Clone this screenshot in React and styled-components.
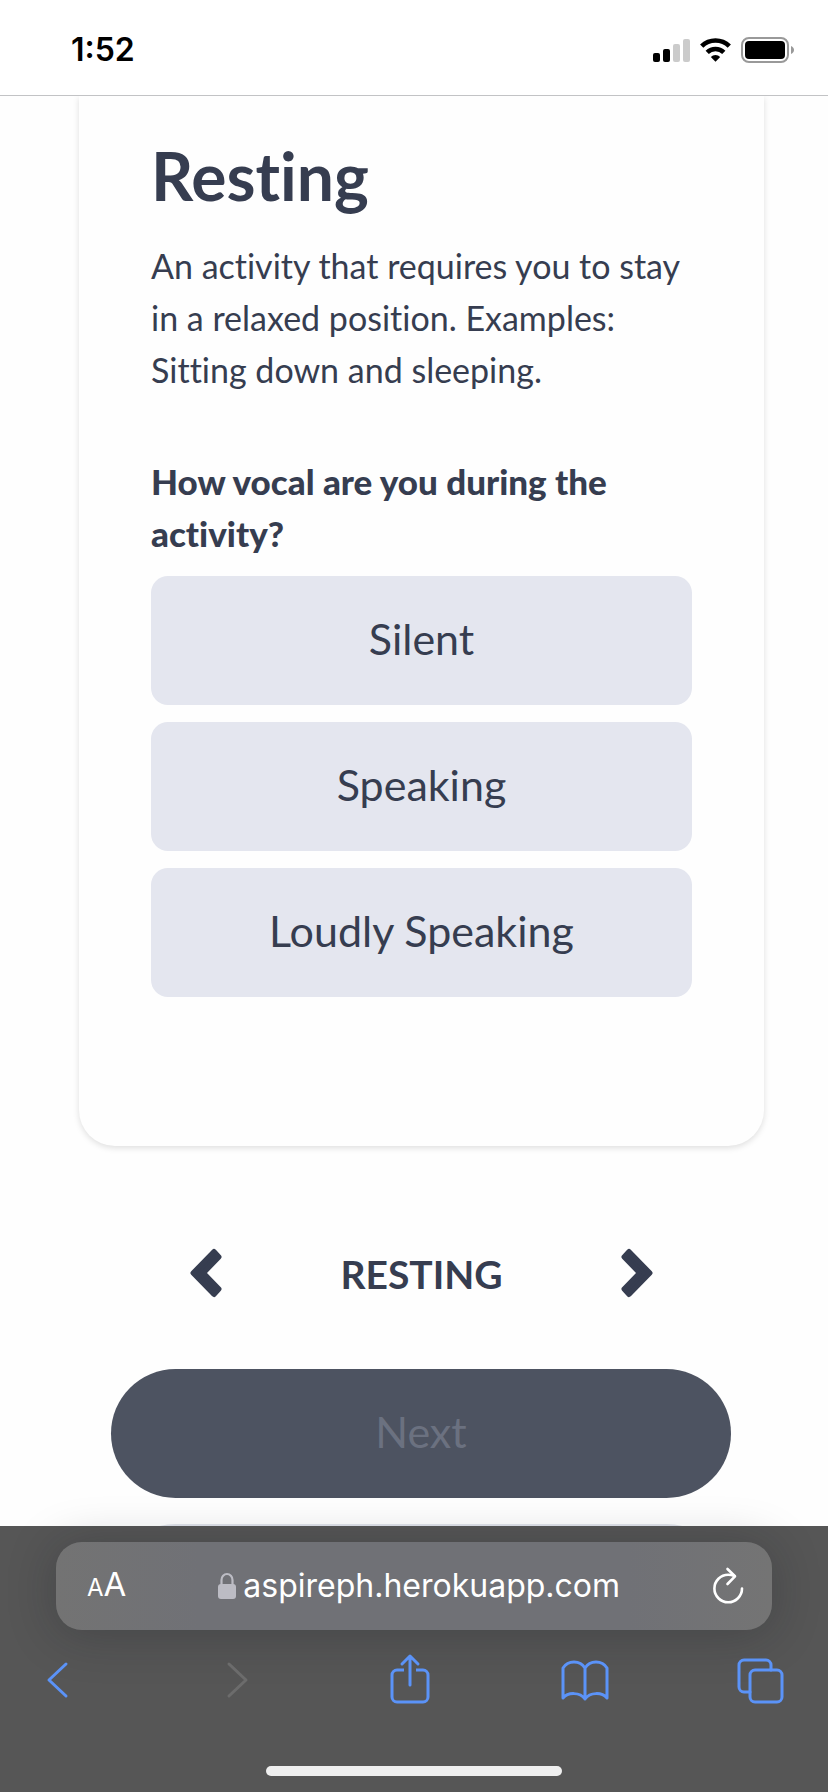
import React from "react";
import styled, { createGlobalStyle } from "styled-components";

const ink = "#363d50";
const blue = "#5b93f8";

const GlobalStyle = createGlobalStyle`
  *, *::before, *::after { box-sizing: border-box; }
  body { margin: 0; background: #fefefe; }
  button { border: 0; padding: 0; background: none; font: inherit; color: inherit; }
  h1, h2, p { margin: 0; }
  svg { display: block; }
`;

const Screen = styled.div`
  display: flex;
  flex-direction: column;
  height: 100vh;
  background: #fefefe;
  color: ${ink};
  font-family: Lato, "Liberation Sans", sans-serif;
  font-variant-ligatures: none;
`;

const StatusBar = styled.header`
  display: flex;
  align-items: center;
  justify-content: space-between;
  flex: none;
  height: 96px;
  padding: 4px 33px 0 71px;
  border-bottom: 1px solid #c2c3c5;
  background: #fff;
  color: #000;
`;

const Clock = styled.time`
  font: 600 32px/40px Inter, sans-serif;
`;

const StatusIcons = styled.div`
  display: flex;
  align-items: center;
  gap: 10px;
`;

const Main = styled.main`
  flex: 1;
  min-height: 0;
  overflow: hidden;
  padding: 0 64px 0 79px;
`;

const Card = styled.section`
  padding: 36px 72px 149px;
  border-radius: 0 0 36px 36px;
  background: #fefefe;
  box-shadow: 0 2px 6px rgba(0, 0, 0, 0.13);
`;

const Title = styled.h1`
  font-size: 66px;
  line-height: 88px;
  font-weight: 700;
`;

const Description = styled.p`
  margin-top: 20px;
  font-size: 34px;
  line-height: 52px;
`;

const Question = styled.h2`
  margin-top: 59px;
  font-size: 35px;
  line-height: 52px;
  font-weight: 900;
`;

const Options = styled.div`
  display: grid;
  gap: 17px;
  margin-top: 17px;
`;

const Option = styled.button`
  height: 129px;
  padding-bottom: 4px;
  border-radius: 17px;
  background: #e4e6ef;
  font-size: 43px;
  line-height: 64px;
`;

const Pager = styled.nav`
  display: flex;
  align-items: center;
  justify-content: space-between;
  margin-top: 98px;
  padding: 0 111px;
  height: 60px;
`;

const PagerButton = styled.button`
  display: grid;
  place-items: center;
  padding-bottom: 2px;
`;

const PagerLabel = styled.span`
  font-size: 39px;
  line-height: 56px;
  font-weight: 700;
`;

const Actions = styled.div`
  display: grid;
  gap: 26px;
  margin-top: 65px;
  padding: 0 33px 0 32px;
`;

const NextButton = styled.button`
  height: 129px;
  padding-bottom: 4px;
  border-radius: 65px;
  background: #4d5361;
  color: #6b7180;
  font-size: 43px;
  line-height: 64px;
`;

const NextPanel = styled.div`
  height: 129px;
  border-radius: 65px;
  background: #e0e2ea;
`;

const BrowserBar = styled.footer`
  display: flex;
  flex-direction: column;
  align-items: center;
  flex: none;
  padding-bottom: 16px;
  background: #565656;
`;

const AddressBar = styled.div`
  display: flex;
  align-items: center;
  justify-content: space-between;
  align-self: stretch;
  height: 88px;
  margin: 16px 56px 0;
  padding: 0 28px 0 31px;
  border-radius: 26px;
  background: linear-gradient(90deg, #737373, #707176 20%, #707176 80%, #747474);
  box-shadow: 0 4px 48px rgba(20, 22, 30, 0.26);
  color: #fff;
  font-family: Inter, sans-serif;
`;

const TextSize = styled.button`
  font-size: 33px;
  line-height: 40px;

  small { font-size: 24px; }
`;

const Address = styled.a`
  display: flex;
  align-items: center;
  gap: 7px;
  color: inherit;
  text-decoration: none;
  font-size: 32px;
  line-height: 40px;
`;

const Toolbar = styled.nav`
  display: flex;
  justify-content: space-between;
  align-self: stretch;
  margin: 22px 43px 58px 34px;
`;

const ToolButton = styled.button`
  color: ${(p) => (p.disabled ? "#6c6c6c" : blue)};
`;

const ReloadButton = styled.button`
  color: #fff;
`;

const HomeIndicator = styled.div`
  width: 296px;
  height: 10px;
  border-radius: 5px;
  background: #efefef;
`;

const ToolIcon = ({ children }) => (
  <svg width="48" height="56" viewBox="0 0 48 56" fill="none" stroke="currentColor" strokeWidth="3" strokeLinecap="round" strokeLinejoin="round" aria-hidden="true">
    {children}
  </svg>
);

const Chevron = ({ d }) => (
  <svg width="32" height="50" viewBox="0 0 32 50" fill="currentColor" stroke="currentColor" strokeWidth="5" strokeLinejoin="round" aria-hidden="true">
    <path d={d} />
  </svg>
);

const Signal = () => (
  <svg width="37" height="24" viewBox="0 0 37 24" aria-hidden="true">
    <rect x="0" y="15" width="7" height="9" rx="2" />
    <rect x="10" y="11" width="7" height="13" rx="2" />
    <rect x="20" y="6" width="7" height="18" rx="2" fill="#cbcbcb" />
    <rect x="30" y="1" width="7" height="23" rx="2" fill="#cbcbcb" />
  </svg>
);

const Wifi = () => (
  <svg width="31" height="24" viewBox="0 0 31 24" fill="none" stroke="#000" strokeWidth="4.6" aria-hidden="true">
    <path d="M1.7 8.2a19.6 19.6 0 0 1 27.6 0" />
    <path d="M7.2 14.4a11.8 11.8 0 0 1 16.6 0" />
    <path d="M10.8 19a6.8 6.8 0 0 1 9.4 0L15.500 23.800z" fill="#000" stroke="none" />
  </svg>
);

const Battery = () => (
  <svg width="54" height="26" viewBox="0 0 54 26" aria-hidden="true">
    <rect x="1" y="1" width="46" height="24" rx="7" fill="none" stroke="#999" strokeWidth="2" />
    <rect x="4" y="4" width="40" height="18" rx="4" />
    <path d="M50 9c4 1.500 4 6.500 0 8z" fill="#999" />
  </svg>
);

const Lock = () => (
  <svg width="18" height="28" viewBox="0 0 18 28" aria-hidden="true">
    <rect x="0" y="12" width="18" height="15" rx="3" fill="#bcbcc4" />
    <path d="M3.500 13V8a5.500 6 0 0 1 11 0v5" fill="none" stroke="#bcbcc4" strokeWidth="2.200" />
  </svg>
);

const Reload = () => (
  <svg width="32" height="38" viewBox="0 0 32 38" fill="none" stroke="currentColor" strokeWidth="2.600" strokeLinecap="round" strokeLinejoin="round" aria-hidden="true">
    <path d="M30 21.500A13.800 13.800 0 1 1 16.200 7.700c2 0 4.300.5 6.300 1.300" />
    <path d="M15.500 2l7.500 7.300L15.500 17" />
  </svg>
);

const options = ["Silent", "Speaking", "Loudly Speaking"];

export default function App() {
  return (
    <Screen>
      <GlobalStyle />
      <StatusBar>
        <Clock>1:52</Clock>
        <StatusIcons>
          <Signal />
          <Wifi />
          <Battery />
        </StatusIcons>
      </StatusBar>
      <Main>
        <Card>
          <Title>Resting</Title>
          <Description>
            An activity that requires you to stay in a relaxed position. Examples: Sitting down and sleeping.
          </Description>
          <Question id="vocal-question">How vocal are you during the activity?</Question>
          <Options role="group" aria-labelledby="vocal-question">
            {options.map((label) => (
              <Option key={label} type="button">{label}</Option>
            ))}
          </Options>
        </Card>
        <Pager aria-label="Activities">
          <PagerButton type="button" aria-label="Previous activity">
            <Chevron d="M3 25L24 3.500L29 9L13.500 25L29 41L24 46.500z" />
          </PagerButton>
          <PagerLabel>RESTING</PagerLabel>
          <PagerButton type="button" aria-label="Next activity">
            <Chevron d="M29 25L8 3.500L3 9L18.500 25L3 41L8 46.500z" />
          </PagerButton>
        </Pager>
        <Actions>
          <NextButton type="button" disabled>Next</NextButton>
          <NextPanel />
        </Actions>
      </Main>
      <BrowserBar>
        <AddressBar>
          <TextSize type="button" aria-label="Text size"><small>A</small>A</TextSize>
          <Address href="#">
            <Lock />
            aspireph.herokuapp.com
          </Address>
          <ReloadButton type="button" aria-label="Reload">
            <Reload />
          </ReloadButton>
        </AddressBar>
        <Toolbar aria-label="Browser">
          <ToolButton type="button" aria-label="Back">
            <ToolIcon><path d="M32 12L15 28l17 16" /></ToolIcon>
          </ToolButton>
          <ToolButton type="button" aria-label="Forward" disabled>
            <ToolIcon><path d="M19 12l17 16-17 16" /></ToolIcon>
          </ToolButton>
          <ToolButton type="button" aria-label="Share">
            <ToolIcon>
              <path d="M18 18h-7a5 5 0 0 0-5 5v22a5 5 0 0 0 5 5h26a5 5 0 0 0 5-5V23a5 5 0 0 0-5-5h-7" strokeLinecap="butt" />
              <path d="M24 33V4M16 12l8-8 8 8" />
            </ToolIcon>
          </ToolButton>
          <ToolButton type="button" aria-label="Bookmarks">
            <ToolIcon>
              <path d="M24 16C19 8 7 8 2 16v30c5-6 17-6 22 1 5-7 17-7 22-1V16c-5-8-17-8-22 0zM24 16v31" />
            </ToolIcon>
          </ToolButton>
          <ToolButton type="button" aria-label="Tabs">
            <ToolIcon>
              <rect x="13" y="18" width="32" height="32" rx="5" />
              <path d="M13 40H7a5 5 0 0 1-5-5V13a5 5 0 0 1 5-5h22a5 5 0 0 1 5 5v5" />
            </ToolIcon>
          </ToolButton>
        </Toolbar>
        <HomeIndicator />
      </BrowserBar>
    </Screen>
  );
}
